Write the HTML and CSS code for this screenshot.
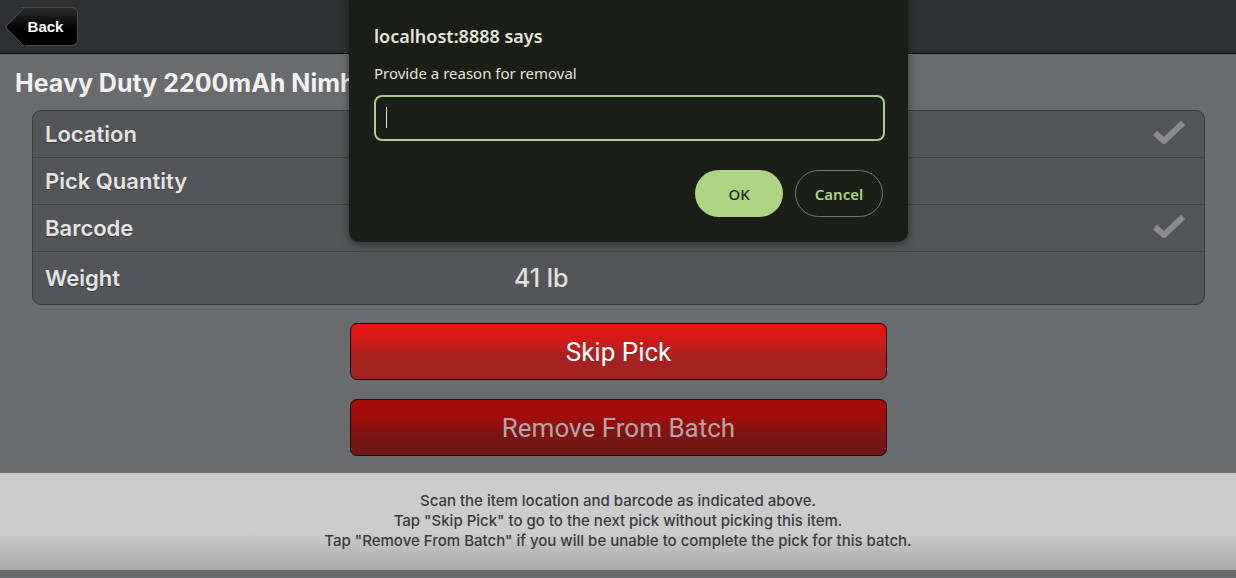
FILE: index.html
```html
<!DOCTYPE html>
<html lang="en">
<head>
    <meta charset="UTF-8">
    <meta name="viewport" content="width=device-width, initial-scale=1.0">
    <title>Pick Item</title>
    <link rel="stylesheet" href="styles.css">
</head>
<body>

    <div class="header">
        <button class="back-btn">Back</button>
    </div>

    <h1 class="item-title">Heavy Duty 2200mAh Nimh Battery</h1>

    <div class="pick-table">
        <div class="pick-row">
            <span class="pick-label">Location</span>
            <span class="pick-value"></span>
            <svg class="check" viewBox="0 0 32 24" width="32" height="24"><path d="M2 13 L11 21 L30 3" fill="none" stroke="#8b8b8d" stroke-width="6"/></svg>
        </div>
        <div class="pick-row">
            <span class="pick-label">Pick Quantity</span>
            <span class="pick-value"></span>
        </div>
        <div class="pick-row">
            <span class="pick-label">Barcode</span>
            <span class="pick-value"></span>
            <svg class="check" viewBox="0 0 32 24" width="32" height="24"><path d="M2 13 L11 21 L30 3" fill="none" stroke="#8b8b8d" stroke-width="6"/></svg>
        </div>
        <div class="pick-row last">
            <span class="pick-label">Weight</span>
            <span class="pick-value">41 lb</span>
        </div>
    </div>

    <div class="actions">
        <button class="red-btn" id="skipPickBtn">Skip Pick</button>
        <button class="red-btn dark" id="removeBtn">Remove From Batch</button>
    </div>

    <div class="footer">
        Scan the item location and barcode as indicated above.<br>
        Tap "Skip Pick" to go to the next pick without picking this item.<br>
        Tap "Remove From Batch" if you will be unable to complete the pick for this batch.
    </div>

    <!-- browser prompt() for removal reason -->
    <div class="prompt">
        <div class="prompt-title">localhost:8888 says</div>
        <div class="prompt-msg">Provide a reason for removal</div>
        <div class="prompt-input"><span class="caret"></span></div>
        <div class="prompt-buttons">
            <button class="ok-btn">OK</button>
            <button class="cancel-btn">Cancel</button>
        </div>
    </div>

</body>
</html>
```

FILE: styles.css
```css
body {
    margin: 0;
    background-color: #6a6b6f;
    font-family: Roboto, "Liberation Sans", sans-serif;
    position: relative;
    height: 578px;
    overflow: hidden;
}
.header {
    height: 53px;
    background-color: #2f3033;
    border-bottom: 1px solid #0c0c0c;
    display: flex;
    align-items: center;
    padding-left: 21px;
}
.back-btn {
    position: relative;
    z-index: 1;
    isolation: isolate;
    height: 39px;
    width: 57px;
    padding: 0 7px 0 0;
    margin-top: -1px;
    font-family: "Liberation Sans", Arial, sans-serif;
    font-size: 15px;
    font-weight: bold;
    color: #fff;
    text-shadow: 0 1px 0 #000;
    background: linear-gradient(#2a2a2a, #000 60%);
    border: 1px solid #4a4a4a;
    border-left: none;
    border-radius: 0 6px 6px 0;
}
.back-btn::before {
    content: "";
    position: absolute;
    left: -11px;
    top: 5px;
    width: 27px;
    height: 27px;
    transform: rotate(45deg);
    background: linear-gradient(135deg, #2a2a2a, #000 60%);
    border-left: 1px solid #4a4a4a;
    border-bottom: 1px solid #4a4a4a;
    border-radius: 0 0 0 4px;
    z-index: -1;
}
.item-title {
    margin: 0;
    padding: 14px 0 0 15px;
    height: 42px;
    font-family: Inter, Roboto, sans-serif;
    font-size: 25px;
    font-weight: 700;
    color: #f2f2f2;
    white-space: nowrap;
}
.pick-table {
    margin: 0 31px 0 32px;
    background-color: #545558;
    border: 1px solid #3b3b3e;
    border-radius: 9px;
}
.pick-row {
    display: grid;
    grid-template-columns: 469px 1fr 40px;
    align-items: center;
    height: 46px;
    padding-left: 12px;
    border-bottom: 1px solid #434346;
}
.pick-row.last {
    height: 52px;
    border-bottom: none;
}
.pick-label {
    font-family: Inter, Roboto, sans-serif;
    font-size: 22px;
    font-weight: 600;
    color: #e4e4e6;
    text-shadow: 0 1px 1px #3a3a3c;
}
.pick-value {
    font-family: Inter, Roboto, sans-serif;
    font-size: 25px;
    font-weight: 500;
    color: #e0e0e2;
}
.check {
    grid-column: 3;
    margin-left: -11px;
    margin-top: -4px;
}
.actions {
    display: flex;
    flex-direction: column;
    align-items: center;
    gap: 19px;
    margin-top: 18px;
    padding-left: 1px;
}
.red-btn {
    width: 537px;
    height: 57px;
    font-family: Roboto, sans-serif;
    font-size: 26px;
    color: #fff;
    background: linear-gradient(#ec130f 0%, #d01a18 30%, #a52222 60%, #a52222 100%);
    border: 1px solid #1e0808;
    border-radius: 7px;
}
.red-btn.dark {
    color: #b5a4a4;
    background: linear-gradient(#a50c0a 0%, #a00d0b 30%, #7a1515 65%, #6f1717 100%);
}
.footer {
    position: absolute;
    left: 0;
    right: 0;
    top: 473px;
    height: 97px;
    box-sizing: border-box;
    padding-top: 18px;
    text-align: center;
    font-family: Inter, Roboto, sans-serif;
    font-size: 15px;
    font-weight: 500;
    line-height: 20px;
    color: #3a3a3c;
    background: linear-gradient(#cccccc 0%, #cccccc 62%, #a9a9a9 100%);
}
.prompt {
    position: absolute;
    left: 349px;
    top: -8px;
    width: 559px;
    height: 250px;
    box-sizing: border-box;
    padding: 32px 23px 0 25px;
    background-color: #1b1d17;
    border-radius: 10px;
    box-shadow: 0 2px 10px rgba(0, 0, 0, 0.45);
    font-family: "Noto Sans", "Open Sans", sans-serif;
    color: #e3e4dc;
}
.prompt-title {
    font-size: 18px;
    font-weight: 600;
    line-height: 24px;
}
.prompt-msg {
    margin-top: 15px;
    font-size: 15px;
    line-height: 20px;
}
.prompt-input {
    margin-top: 12px;
    height: 46px;
    box-sizing: border-box;
    border: 2px solid #a9cf86;
    border-radius: 8px;
    padding: 10px 0 0 10px;
}
.caret {
    display: block;
    width: 1px;
    height: 21px;
    background-color: #e3e4dc;
}
.prompt-buttons {
    display: flex;
    justify-content: flex-end;
    gap: 12px;
    margin-top: 29px;
    padding-right: 2px;
}
.ok-btn, .cancel-btn {
    width: 88px;
    height: 47px;
    border-radius: 24px;
    font-family: "Noto Sans", "Open Sans", sans-serif;
    font-size: 15px;
    font-weight: 500;
}
.ok-btn {
    background-color: #acd483;
    color: #1c2a10;
    border: none;
}
.cancel-btn {
    background-color: transparent;
    color: #acd483;
    border: 1px solid #75786d;
    font-weight: 600;
}
```
